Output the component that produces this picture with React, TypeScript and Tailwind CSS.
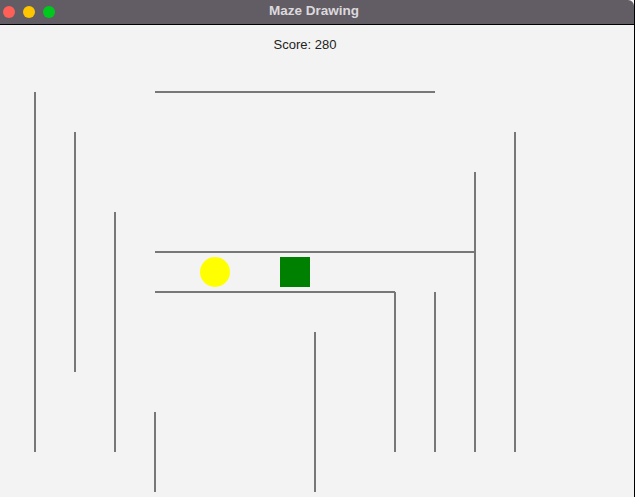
const WALLS: [number, number, number, number][] = [
  // page coords, y shifted by the title bar later
  [35, 92, 35, 452],
  [75, 132, 75, 372],
  [115, 212, 115, 452],
  [155, 412, 155, 492],
  [155, 92, 435, 92],
  [155, 252, 475, 252],
  [155, 292, 395, 292],
  [395, 292, 395, 452],
  [315, 332, 315, 492],
  [435, 292, 435, 452],
  [475, 172, 475, 452],
  [515, 132, 515, 452],
];

const TOP = 25;

export default function App() {
  return (
    <div className="w-[637px] h-[497px] bg-white overflow-hidden" style={{ fontFamily: '"Liberation Sans", Arial, sans-serif' }}>
      <div className="w-[635px] h-full flex flex-col border-r border-black bg-[#f3f3f3]">
        {/* Title bar */}
        <div className="relative h-[25px] shrink-0 bg-[#625d64] border-b border-black rounded-tr-[6px] flex items-center">
          <div className="flex items-center gap-[8px] pl-[3px]">
            <span className="w-[12px] h-[12px] rounded-full bg-[#fe5f57]" />
            <span className="w-[12px] h-[12px] rounded-full bg-[#fdc601]" />
            <span className="w-[12px] h-[12px] rounded-full bg-[#00c91e]" />
          </div>
          <div className="absolute inset-0 flex items-center justify-center pr-[6px] text-[13.5px] font-bold text-[#dcd9dd] pb-[1px]">
            Maze Drawing
          </div>
        </div>

        {/* Canvas */}
        <div className="relative flex-1">
          <p className="text-center text-[13px] leading-[19px] text-[#222] pt-[10px] pr-[24px]">Score: 280</p>
          <svg className="absolute inset-0" width="635" height="472" viewBox="0 0 635 472">
            {WALLS.map(([x1, y1, x2, y2], i) => (
              <line key={i} x1={x1} y1={y1 - TOP} x2={x2} y2={y2 - TOP} stroke="#777777" strokeWidth={2} />
            ))}
            <circle cx={215} cy={272 - TOP} r={15} fill="#ffff00" />
            <rect x={280} y={257 - TOP} width={30} height={30} fill="#008000" />
          </svg>
        </div>
      </div>
    </div>
  );
}
